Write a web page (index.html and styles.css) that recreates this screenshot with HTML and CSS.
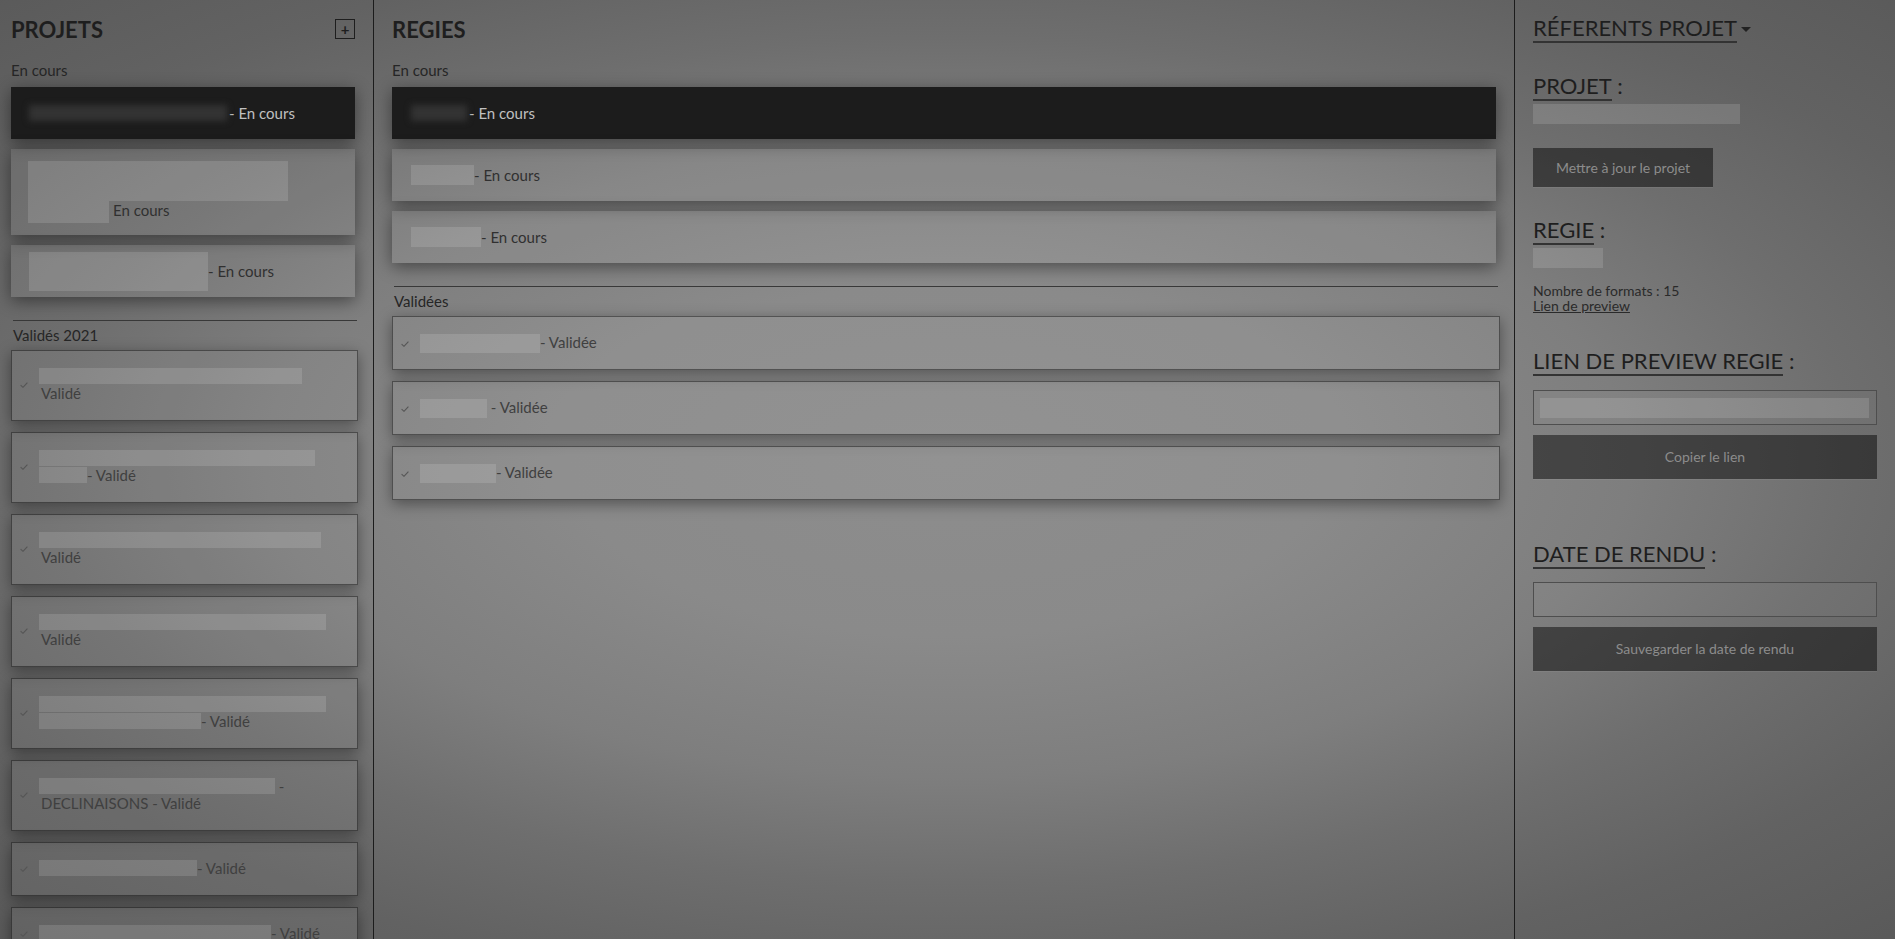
FILE: index.html
```html
<!DOCTYPE html>
<html lang="fr">
<head>
<meta charset="utf-8">
<title>Projets - Regies</title>
<link rel="stylesheet" href="styles.css">
</head>
<body>
<div class="app">
  <section class="col col-left">
    <div class="col-head">
      <h1 class="col-title">PROJETS</h1>
      <button class="add-btn" type="button">+</button>
    </div>
    <div class="sec-label">En cours</div>
    <div class="list list-current">
      <div class="card card-active"><span class="redact redact-dark w-200"></span><span class="ctext">- En cours</span></div>
      <div class="card card-tall">
        <div class="stack">
          <span class="redact r-block w-260 h-40"></span>
          <div class="stack-row"><span class="redact w-81 h-22"></span><span class="ctext">En cours</span></div>
        </div>
      </div>
      <div class="card"><span class="redact w-179 h-39"></span><span class="ctext">- En cours</span></div>
    </div>
    <hr class="sep">
    <div class="sec-label sec-label-done">Validés 2021</div>
    <div class="list list-done">
      <div class="vcard"><svg class="check" viewBox="0 0 8 6"><polyline points="0.6,3.1 3,5.3 7.4,0.7"/></svg><div class="vtext"><span class="redact rl w-263"></span><br>Validé</div></div>
      <div class="vcard"><svg class="check" viewBox="0 0 8 6"><polyline points="0.6,3.1 3,5.3 7.4,0.7"/></svg><div class="vtext"><span class="redact rl w-276"></span><br><span class="redact rl w-48"></span>- Validé</div></div>
      <div class="vcard"><svg class="check" viewBox="0 0 8 6"><polyline points="0.6,3.1 3,5.3 7.4,0.7"/></svg><div class="vtext"><span class="redact rl w-282"></span><br>Validé</div></div>
      <div class="vcard"><svg class="check" viewBox="0 0 8 6"><polyline points="0.6,3.1 3,5.3 7.4,0.7"/></svg><div class="vtext"><span class="redact rl w-287"></span><br>Validé</div></div>
      <div class="vcard"><svg class="check" viewBox="0 0 8 6"><polyline points="0.6,3.1 3,5.3 7.4,0.7"/></svg><div class="vtext"><span class="redact rl w-287"></span><br><span class="redact rl w-162"></span>- Validé</div></div>
      <div class="vcard"><svg class="check" viewBox="0 0 8 6"><polyline points="0.6,3.1 3,5.3 7.4,0.7"/></svg><div class="vtext"><span class="redact rl w-236"></span> -<br>DECLINAISONS - Validé</div></div>
      <div class="vcard"><svg class="check" viewBox="0 0 8 6"><polyline points="0.6,3.1 3,5.3 7.4,0.7"/></svg><div class="vtext"><span class="redact rl w-158"></span>- Validé</div></div>
      <div class="vcard"><svg class="check" viewBox="0 0 8 6"><polyline points="0.6,3.1 3,5.3 7.4,0.7"/></svg><div class="vtext"><span class="redact rl w-232"></span>- Validé</div></div>
    </div>
  </section>

  <section class="col col-mid">
    <div class="col-head">
      <h1 class="col-title">REGIES</h1>
    </div>
    <div class="sec-label">En cours</div>
    <div class="list list-current">
      <div class="card card-active card-mid"><span class="redact redact-dark w-56"></span><span class="ctext">- En cours</span></div>
      <div class="card card-mid"><span class="redact w-63 h-20"></span><span class="ctext">- En cours</span></div>
      <div class="card card-mid"><span class="redact w-70 h-20"></span><span class="ctext">- En cours</span></div>
    </div>
    <hr class="sep sep-mid">
    <div class="sec-label sec-label-done">Validées</div>
    <div class="list list-done list-done-mid">
      <div class="vcard vcard-wide"><svg class="check" viewBox="0 0 8 6"><polyline points="0.6,3.1 3,5.3 7.4,0.7"/></svg><div class="vtext"><span class="redact rl rl-19 w-120"></span>- Validée</div></div>
      <div class="vcard vcard-wide"><svg class="check" viewBox="0 0 8 6"><polyline points="0.6,3.1 3,5.3 7.4,0.7"/></svg><div class="vtext"><span class="redact rl rl-19 w-67"></span> - Validée</div></div>
      <div class="vcard vcard-wide"><svg class="check" viewBox="0 0 8 6"><polyline points="0.6,3.1 3,5.3 7.4,0.7"/></svg><div class="vtext"><span class="redact rl rl-19 w-76"></span>- Validée</div></div>
    </div>
  </section>

  <aside class="col col-right">
    <h2 class="rh rh-first"><span class="ul">RÉFERENTS PROJET</span><span class="caret"></span></h2>
    <h2 class="rh rh-projet"><span class="ul">PROJET</span> :</h2>
    <span class="redact r-block w-207 h-20 after-h"></span>
    <button class="btn btn-small" type="button">Mettre à jour le projet</button>
    <h2 class="rh rh-regie"><span class="ul">REGIE</span> :</h2>
    <span class="redact r-block w-70 h-20 after-h"></span>
    <p class="info">Nombre de formats : 15<br><a class="link" href="#">Lien de preview</a></p>
    <h2 class="rh rh-lien"><span class="ul">LIEN DE PREVIEW REGIE</span> :</h2>
    <div class="field"><span class="redact r-block h-20"></span></div>
    <button class="btn btn-full" type="button">Copier le lien</button>
    <h2 class="rh rh-date"><span class="ul">DATE DE RENDU</span> :</h2>
    <div class="field field-date"></div>
    <button class="btn btn-full" type="button">Sauvegarder la date de rendu</button>
  </aside>
</div>
</body>
</html>
```

FILE: styles.css
```css
html, body {
  margin: 0;
  padding: 0;
}

body {
  width: 1895px;
  height: 939px;
  overflow: hidden;
  font-family: Lato, "Open Sans", "Liberation Sans", sans-serif;
  color: #2a2a2a;
  background: radial-gradient(ellipse 80% 75% at 50% 49%,
    #8d8d8d 0%, #8a8a8a 25%, #7e7e7e 45%, #6e6e6e 60%, #626262 75%, #565656 100%);
}

.app {
  display: grid;
  grid-template-columns: 374px 1141px 380px;
  height: 939px;
}

.col {
  box-sizing: border-box;
  min-width: 0;
  overflow: hidden;
}

.col-left {
  border-right: 1px solid #1c1c1c;
  padding: 14px 18px 0 11px;
}

.col-mid {
  border-right: 1px solid #1c1c1c;
  padding: 14px 18px 0 18px;
}

.col-right {
  padding: 0 18px;
  display: flex;
  flex-direction: column;
  align-items: flex-start;
}

/* headers */
.col-head {
  display: flex;
  justify-content: space-between;
  align-items: flex-start;
  height: 26px;
}

.col-title {
  margin: 3px 0 0;
  font-size: 22px;
  line-height: 26px;
  font-weight: 700;
  color: #1e1e1e;
}

.add-btn {
  box-sizing: border-box;
  width: 20px;
  height: 20px;
  margin-top: 5px;
  padding: 0;
  border: 1px solid #1e1e1e;
  background: transparent;
  color: #1e1e1e;
  font: 700 15px/17px Lato, sans-serif;
  text-align: center;
}

.sec-label {
  margin-top: 21px;
  font-size: 15px;
  line-height: 18px;
  color: #262626;
}

.sec-label-done {
  margin-top: 5px;
  margin-left: 2px;
}

.list {
  display: flex;
  flex-direction: column;
}

.list-current {
  margin-top: 8px;
  gap: 10px;
}

.list-done {
  margin-top: 6px;
  gap: 11px;
  margin-right: -3px;
}

.list-done-mid {
  margin-right: -4px;
}

/* ongoing cards */
.card {
  box-sizing: border-box;
  min-height: 52px;
  display: flex;
  align-items: center;
  padding: 0 18px;
  background: rgba(255, 255, 255, 0.07);
  box-shadow: 0 4px 16px rgba(0, 0, 0, 0.45);
  font-size: 15px;
  line-height: 18px;
  color: #303030;
}

.card-mid {
  padding-left: 19px;
}

.card-active {
  background: #1c1c1c;
  color: #c0c0c0;
}

.card-tall {
  min-height: 86px;
  padding-left: 17px;
}

.ctext {
  white-space: nowrap;
}

.stack {
  display: flex;
  flex-direction: column;
  align-items: flex-start;
}

.stack-row {
  display: flex;
  align-items: flex-start;
}

.stack-row .ctext {
  margin-left: 4px;
  line-height: 18px;
}

/* redacted blocks */
.redact {
  display: inline-block;
  height: 20px;
  background: rgba(255, 255, 255, 0.13);
  flex: none;
}

.redact-dark {
  height: 16px;
  background: #333;
  filter: blur(3px);
  margin-right: 2px;
}

.r-block {
  display: block;
}

.rl {
  height: 16px;
  vertical-align: top;
  margin-left: -2px;
}

.rl-19 {
  height: 19px;
}

.w-48 { width: 48px; }
.w-56 { width: 56px; }
.w-63 { width: 63px; }
.w-67 { width: 67px; }
.w-70 { width: 70px; }
.w-76 { width: 76px; }
.w-81 { width: 81px; }
.w-120 { width: 120px; }
.w-158 { width: 158px; }
.w-162 { width: 162px; }
.w-179 { width: 179px; }
.w-200 { width: 198px; }
.w-207 { width: 207px; }
.w-232 { width: 232px; }
.w-236 { width: 236px; }
.w-260 { width: 260px; }
.w-263 { width: 263px; }
.w-276 { width: 276px; }
.w-282 { width: 282px; }
.w-287 { width: 287px; }
.h-20 { height: 20px; }
.h-22 { height: 22px; }
.h-39 { height: 39px; }
.h-40 { height: 40px; }

/* separators */
.sep {
  margin: 23px -2px 0 2px;
  border: 0;
  border-top: 1px solid #383838;
  height: 0;
}

.sep-mid {
  margin-right: -2px;
}

/* validated cards */
.vcard {
  box-sizing: border-box;
  display: flex;
  align-items: center;
  padding: 17px 8px 18px 0;
  border: 1px solid rgba(0, 0, 0, 0.42);
  background: rgba(255, 255, 255, 0.05);
  box-shadow: 0 4px 14px rgba(0, 0, 0, 0.4);
  font-size: 15px;
  line-height: 17px;
  color: #404040;
}

.vcard-wide {
  padding: 17px 8px 16px 0;
}

.check {
  flex: none;
  width: 8px;
  height: 6px;
  margin: 0 11px 0 8px;
  fill: none;
  stroke: #555;
  stroke-width: 1.1;
}

.vtext {
  min-width: 0;
  padding-left: 2px;
}

/* right panel */
.rh {
  margin: 28px 0 0;
  height: 30px;
  font-size: 22px;
  line-height: 30px;
  font-weight: 400;
  color: #1e1e1e;
  white-space: nowrap;
}

.rh-first {
  margin-top: 13px;
}

.rh-lien {
  margin-top: 33px;
}

.rh-date {
  margin-top: 60px;
}

.ul {
  display: inline-block;
  line-height: 22px;
  padding-bottom: 2px;
  border-bottom: 2px solid #333;
}

.caret {
  display: inline-block;
  width: 0;
  height: 0;
  margin-left: 4px;
  vertical-align: 4px;
  border-left: 5px solid transparent;
  border-right: 5px solid transparent;
  border-top: 5px solid #222;
}

.after-h {
  margin-top: 3px;
}

.btn {
  box-sizing: border-box;
  border: 0;
  padding: 0;
  background: rgba(0, 0, 0, 0.47);
  box-shadow: 0 1px 0 rgba(255, 255, 255, 0.06);
  color: #8c8c8c;
  font: 400 14px/1 Lato, sans-serif;
  text-align: center;
}

.btn-small {
  width: 180px;
  height: 39px;
  margin-top: 24px;
}

.btn-full {
  width: 100%;
  height: 44px;
  margin-top: 10px;
}

.info {
  margin: 15px 0 0;
  font-size: 14px;
  line-height: 15px;
  color: #2a2a2a;
}

.link {
  color: #2a2a2a;
  text-decoration: underline;
}

.field {
  box-sizing: border-box;
  width: 100%;
  height: 35px;
  margin-top: 14px;
  padding: 7px 7px 0 6px;
  border: 1px solid #4e4e4e;
  background: rgba(255, 255, 255, 0.03);
}

.field-date {
  margin-top: 13px;
}
```
